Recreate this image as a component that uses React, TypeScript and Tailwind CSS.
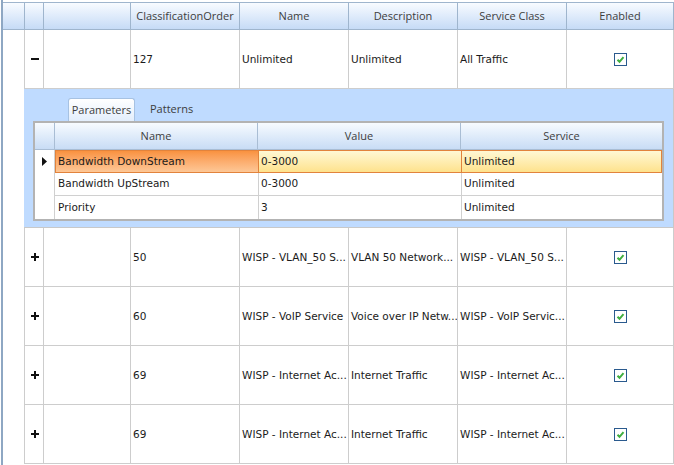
import React from "react";

type Row = {
  order: string;
  name: string;
  desc: string;
  svc: string;
  expanded?: boolean;
};

const rows: Row[] = [
  { order: "127", name: "Unlimited", desc: "Unlimited", svc: "All Traffic", expanded: true },
  { order: "50", name: "WISP - VLAN_50 S...", desc: "VLAN 50 Network...", svc: "WISP - VLAN_50 S..." },
  { order: "60", name: "WISP - VoIP Service", desc: "Voice over IP Netw...", svc: "WISP -  VoIP Servic..." },
  { order: "69", name: "WISP - Internet Ac...", desc: "Internet Traffic", svc: "WISP - Internet Ac..." },
  { order: "69", name: "WISP - Internet Ac...", desc: "Internet Traffic", svc: "WISP - Internet Ac..." },
];

const params = [
  { name: "Bandwidth DownStream", value: "0-3000", svc: "Unlimited" },
  { name: "Bandwidth UpStream", value: "0-3000", svc: "Unlimited" },
  { name: "Priority", value: "3", svc: "Unlimited" },
];

const cellFont = "font-['DejaVu_Sans',sans-serif] text-[10.5px] text-[#1b1b1b]";
const headFont = "font-['Open_Sans',sans-serif] text-[11px] text-[#3d3d3d]";

function Check() {
  return (
    <svg width="13" height="13" viewBox="0 0 13 13">
      <rect x="0.5" y="0.5" width="12" height="12" fill="white" stroke="#2a5a8e" />
      <path d="M3.5 6.8 L5.5 8.8 L9.5 4.2" fill="none" stroke="#3fae3f" strokeWidth="2" />
    </svg>
  );
}

function Expander({ open }: { open?: boolean }) {
  return (
    <svg width="8" height="8" viewBox="0 0 8 8">
      <rect x="0" y="3" width="8" height="2" fill="#111" />
      {!open && <rect x="3" y="0" width="2" height="8" fill="#111" />}
    </svg>
  );
}

function DetailPanel() {
  return (
    <div className="w-[650px] h-[139px] bg-[#bfdbff] border-b border-r border-[#c8c8c8] pt-[9px]">
      {/* tabs */}
      <div className="flex items-end h-[23px] pl-[44px]">
        <div className={`w-[67px] h-[23px] rounded-t-[3px] border border-b-0 border-[#a7c2e2] bg-gradient-to-b from-[#ffffff] to-[#e3eefc] flex items-center justify-center ${headFont} text-[#1f1f1f]`}>
          Parameters
        </div>
        <div className={`h-[23px] flex items-center pl-[15px] ${headFont} text-[#1f1f1f]`}>Patterns</div>
      </div>
      {/* inner grid */}
      <div className="ml-[9px] w-[631px] border-2 border-[#b3b3b3] bg-white">
        <div className="flex h-[27px] bg-gradient-to-b from-[#f7fbff] to-[#c8dcf5] border-b border-[#a9bdd4]">
          <div className="w-[20px] border-r border-[#a9bdd4]" />
          <div className={`w-[203px] border-r border-[#a9bdd4] flex items-center justify-center ${headFont}`}>Name</div>
          <div className={`w-[203px] border-r border-[#a9bdd4] flex items-center justify-center ${headFont}`}>Value</div>
          <div className={`flex-1 flex items-center justify-center ${headFont}`}>Service</div>
        </div>
        {params.map((p, i) => {
          const sel = i === 0;
          return (
            <div key={p.name} className="flex h-[23px]">
              <div className="w-[20px] flex items-center justify-center border-r border-[#d0d0d0]">
                {sel && (
                  <svg width="5" height="9" viewBox="0 0 5 9">
                    <path d="M0 0 L5 4.5 L0 9 Z" fill="#111" />
                  </svg>
                )}
              </div>
              {sel ? (
                <div className="flex flex-1 border border-[#e2833c]">
                  <div className={`w-[203px] border-r border-[#e2833c] bg-gradient-to-b from-[#f9923f] to-[#fdc796] flex items-center pl-[2px] ${cellFont}`}>
                    {p.name}
                  </div>
                  <div className={`w-[203px] border-r border-[#e2833c] bg-gradient-to-b from-[#fff8d4] to-[#fee28c] flex items-center pl-[2px] ${cellFont}`}>
                    {p.value}
                  </div>
                  <div className={`flex-1 bg-gradient-to-b from-[#fff8d4] to-[#fee28c] flex items-center pl-[2px] ${cellFont}`}>
                    {p.svc}
                  </div>
                </div>
              ) : (
                <div className={`flex flex-1 ${i < params.length - 1 ? "border-b border-[#d0d0d0]" : ""}`}>
                  <div className={`w-[204px] border-r border-[#d0d0d0] flex items-center pl-[3px] ${cellFont}`}>{p.name}</div>
                  <div className={`w-[203px] border-r border-[#d0d0d0] flex items-center pl-[2px] ${cellFont}`}>{p.value}</div>
                  <div className={`flex-1 flex items-center pl-[2px] ${cellFont}`}>{p.svc}</div>
                </div>
              )}
            </div>
          );
        })}
      </div>
    </div>
  );
}

export default function App() {
  const head = ["", "", "ClassificationOrder", "Name", "Description", "Service Class", "Enabled"];
  const widths = ["w-[19px]", "w-[87px]", "w-[109px]", "w-[109px]", "w-[109px]", "w-[109px]", "w-[107px]"];

  return (
    <div className="w-[674px] h-[465px] overflow-hidden bg-white flex">
      <div className="w-[1px]" />
      <div className="w-[2px] bg-[#8ea7c3]" />
      <div className="flex-1 flex flex-col pt-[2px]">
        {/* header */}
        <div className="flex h-[28px] border-t border-b border-[#9fb5cd] bg-gradient-to-b from-[#f8fbff] to-[#c6dbf6]">
          <div className="w-[22px] border-r border-[#9fb5cd]" />
          {head.map((h, i) => (
            <div
              key={i}
              className={`${widths[i]} border-r border-[#9fb5cd] flex items-center justify-center ${headFont}`}
            >
              {h}
            </div>
          ))}
        </div>
        {/* body */}
        {rows.map((r, idx) => (
          <React.Fragment key={idx}>
            <div className="flex h-[59px]">
              <div className="w-[21px]" />
              <div className="w-[20px] border-l border-r border-b border-[#cdcdcd] flex items-center justify-center pl-[1px]">
                <Expander open={r.expanded} />
              </div>
              <div className="w-[87px] border-r border-b border-[#cdcdcd]" />
              <div className={`w-[109px] border-r border-b border-[#cdcdcd] flex items-center pl-[2px] pt-[2px] ${cellFont}`}>{r.order}</div>
              <div className={`w-[109px] border-r border-b border-[#cdcdcd] flex items-center pl-[2px] pt-[2px] whitespace-nowrap overflow-hidden ${cellFont}`}>{r.name}</div>
              <div className={`w-[109px] border-r border-b border-[#cdcdcd] flex items-center pl-[2px] pt-[2px] whitespace-nowrap overflow-hidden ${cellFont}`}>{r.desc}</div>
              <div className={`w-[109px] border-r border-b border-[#cdcdcd] flex items-center pl-[2px] pt-[2px] whitespace-nowrap overflow-hidden ${cellFont}`}>{r.svc}</div>
              <div className="w-[107px] border-r border-b border-[#cdcdcd] flex items-center justify-center pt-[1px]">
                <Check />
              </div>
            </div>
            {r.expanded && (
              <div className="flex">
                <div className="w-[21px]" />
                <DetailPanel />
              </div>
            )}
          </React.Fragment>
        ))}
      </div>
    </div>
  );
}
